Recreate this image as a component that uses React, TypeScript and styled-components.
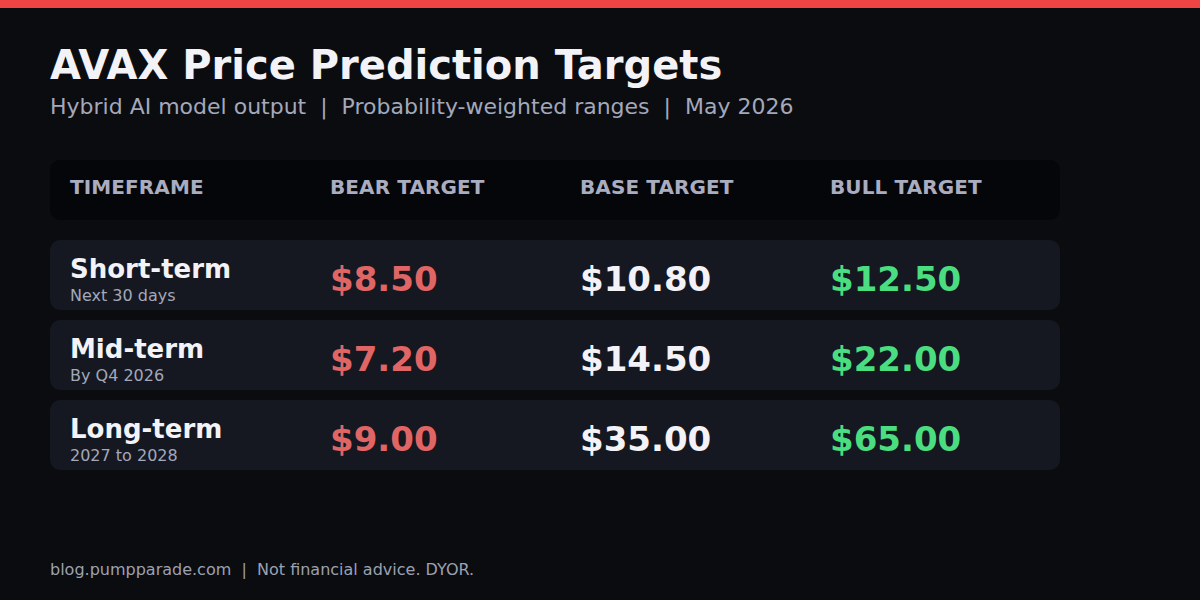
import React from "react";
import styled, { createGlobalStyle } from "styled-components";

const Global = createGlobalStyle`
  html, body { margin: 0; padding: 0; background: #0b0c10; }
  body { font-family: "DejaVu Sans", "Liberation Sans", sans-serif; }
`;

const Page = styled.div`
  width: 1200px;
  height: 600px;
  background: #0b0c10;
  display: flex;
  flex-direction: column;
  box-sizing: border-box;
  overflow: hidden;
`;

const TopBar = styled.div`
  height: 8px;
  background: #ef4444;
  flex: none;
`;

const Content = styled.div`
  flex: 1;
  display: flex;
  flex-direction: column;
  padding: 33px 140px 0 50px;
`;

const Title = styled.h1`
  margin: 0;
  font-size: 40px;
  line-height: 48px;
  font-weight: 700;
  color: #f2f2f7;
`;

const Subtitle = styled.div`
  margin-top: 4px;
  font-size: 22px;
  line-height: 28px;
  color: #a3a8ba;
`;

const Table = styled.div`
  margin-top: 39px;
  display: flex;
  flex-direction: column;
  gap: 10px;
`;

const Grid = `
  display: grid;
  grid-template-columns: 260px 250px 250px 1fr;
  padding: 0 20px;
  border-radius: 10px;
`;

const HeaderRow = styled.div`
  ${Grid}
  height: 60px;
  background: #050609;
  margin-bottom: 10px;
  align-items: start;
  padding-top: 15px;
  box-sizing: border-box;
`;

const HeadCell = styled.div`
  font-size: 20px;
  line-height: 24px;
  font-weight: 700;
  letter-spacing: 0.1px;
  color: #a9adbf;
`;

const Row = styled.div`
  ${Grid}
  height: 70px;
  background: #151821;
  align-items: center;
`;

const Label = styled.div`
  display: flex;
  flex-direction: column;
  padding-top: 10px;
`;

const LabelMain = styled.div`
  font-size: 26px;
  line-height: 30px;
  font-weight: 700;
  color: #f2f2f7;
`;

const LabelSub = styled.div`
  margin-top: 2px;
  font-size: 16px;
  line-height: 20px;
  color: #a3a8ba;
`;

const Price = styled.div<{ $tone: "bear" | "base" | "bull" }>`
  font-size: 34px;
  line-height: 40px;
  font-weight: 700;
  padding-top: 8px;
  color: ${(p) =>
    p.$tone === "bear" ? "#e06666" : p.$tone === "bull" ? "#4ade80" : "#f2f2f7"};
`;

const Spacer = styled.div`
  flex: 1;
`;

const Footer = styled.div`
  font-size: 16px;
  line-height: 20px;
  color: #9ca1b1;
  padding-bottom: 20px;
`;

const rows = [
  { name: "Short-term", sub: "Next 30 days", bear: "$8.50", base: "$10.80", bull: "$12.50" },
  { name: "Mid-term", sub: "By Q4 2026", bear: "$7.20", base: "$14.50", bull: "$22.00" },
  { name: "Long-term", sub: "2027 to 2028", bear: "$9.00", base: "$35.00", bull: "$65.00" },
];

export default function App() {
  return (
    <Page>
      <Global />
      <TopBar />
      <Content>
        <Title>AVAX Price Prediction Targets</Title>
        <Subtitle>
          Hybrid AI model output&nbsp; |&nbsp; Probability-weighted ranges&nbsp; |&nbsp; May 2026
        </Subtitle>
        <Table>
          <HeaderRow>
            <HeadCell>TIMEFRAME</HeadCell>
            <HeadCell>BEAR TARGET</HeadCell>
            <HeadCell>BASE TARGET</HeadCell>
            <HeadCell>BULL TARGET</HeadCell>
          </HeaderRow>
          {rows.map((r) => (
            <Row key={r.name}>
              <Label>
                <LabelMain>{r.name}</LabelMain>
                <LabelSub>{r.sub}</LabelSub>
              </Label>
              <Price $tone="bear">{r.bear}</Price>
              <Price $tone="base">{r.base}</Price>
              <Price $tone="bull">{r.bull}</Price>
            </Row>
          ))}
        </Table>
        <Spacer />
        <Footer>blog.pumpparade.com&nbsp; |&nbsp; Not financial advice. DYOR.</Footer>
      </Content>
    </Page>
  );
}
